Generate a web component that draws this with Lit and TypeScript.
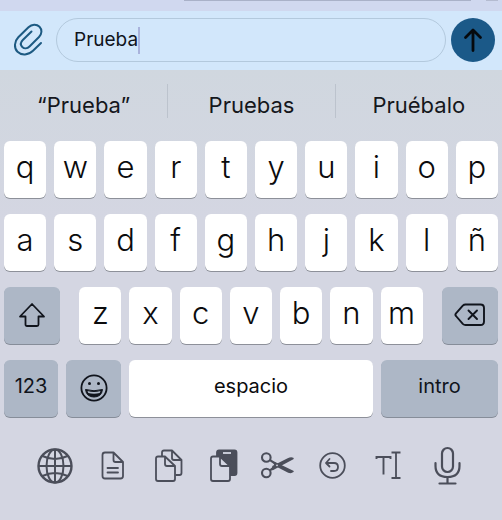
import { LitElement, html, css, svg, nothing } from "lit";
import { customElement, property, state } from "lit/decorators.js";
import { classMap } from "lit/directives/class-map.js";

const icons = {
  clip: svg`<svg width="30" height="34" viewBox="0 0 30 34" fill="none" stroke="#1d5a82" stroke-width="2" stroke-linecap="round" stroke-linejoin="round">
    <path d="M28 20L20 27.800C15.500 32.300 8.300 32.600 4.500 28.800C0.800 25 1.200 18.500 5.300 14.300L15.500 4.200C18.800 1 23.600 0.800 26.500 3.700C29.300 6.500 29 11 26 14L16.500 23.500C14.300 25.700 11.200 25.800 9.300 24C7.400 22 7.600 19.200 9.800 17L18.500 8.500"/></svg>`,
  send: svg`<svg width="22" height="26" viewBox="0 0 22 26" fill="none" stroke="#05090d" stroke-width="2.800" stroke-linecap="round" stroke-linejoin="round">
    <path d="M11 23.500V3.500M3.500 10.500L11 3L18.500 10.500"/></svg>`,
  shift: svg`<svg width="28" height="26" viewBox="0 0 28 26" fill="none" stroke="#10141c" stroke-width="1.800" stroke-linejoin="round">
    <path d="M14 2L26 14.500H20.500V22.500Q20.500 24 19 24H9Q7.500 24 7.500 22.500V14.500H2Z"/></svg>`,
  backspace: svg`<svg width="32" height="24" viewBox="0 0 32 24" fill="none" stroke="#10141c" stroke-width="1.900" stroke-linejoin="round" stroke-linecap="round">
    <path d="M11 1.500H26.500Q30 1.500 30 5V18.500Q30 22 26.500 22H11.500Q10 22 8.800 20.800L2 13Q0.800 11.700 2 10.300L8.800 2.700Q10 1.500 11.500 1.500Z"/><path d="M14.500 7.500L23 16M23 7.500L14.500 16"/></svg>`,
  smile: svg`<svg width="30" height="30" viewBox="0 0 30 30" fill="none" stroke="#10141c" stroke-width="1.800">
    <circle cx="15" cy="15" r="12.600"/><circle cx="10.500" cy="10.500" r="1.500" fill="#10141c" stroke="none"/><circle cx="19.500" cy="10.500" r="1.500" fill="#10141c" stroke="none"/>
    <path d="M6.500 16.500Q15 19 23.500 16.500Q22.500 24 15 24Q7.500 24 6.500 16.500Z" fill="#10141c" stroke-width="1"/><path d="M8.500 18Q15 19.800 21.500 18L20.700 20Q15 21.500 9.300 20Z" fill="#adb7c6" stroke="none"/></svg>`,
  globe: svg`<svg width="36" height="36" viewBox="0 0 36 36" fill="none" stroke="currentColor" stroke-width="2">
    <circle cx="18" cy="18" r="16.500" stroke-width="2.400"/><ellipse cx="18" cy="18" rx="8.500" ry="16.500"/><path d="M18 1.500V34.500M1.500 18H34.500M5.500 8Q18 14 30.500 8M5.500 28Q18 22 30.500 28"/></svg>`,
  document: svg`<svg width="36" height="36" viewBox="0 0 36 36" fill="none" stroke="currentColor" stroke-width="1.800" stroke-linejoin="round" stroke-linecap="round">
    <path d="M19.500 4.500H11Q8.500 4.500 8.500 7V28Q8.500 30.500 11 30.500H26.500Q29 30.500 29 28V14ZM19.500 4.500V12Q19.500 14 21.500 14H29M13.500 20H24M13.500 24.500H24"/></svg>`,
  copy: svg`<svg width="36" height="36" viewBox="0 0 36 36" fill="none" stroke="currentColor" stroke-width="1.800" stroke-linejoin="round">
    <path d="M12 8V4.500Q12 2.500 14 2.500H22L31.500 12V25Q31.500 27 29.500 27H25.500M22 2.500V10Q22 12 24 12H31.500"/>
    <path d="M15 8.500H8Q6 8.500 6 10.500V31Q6 33 8 33H23Q25 33 25 31V18ZM15 8.500V16Q15 18 17 18H25"/></svg>`,
  paste: svg`<svg width="36" height="36" viewBox="0 0 36 36" fill="none" stroke="currentColor" stroke-width="1.800" stroke-linejoin="round">
    <path fill="currentColor" d="M12 8V4.500Q12 2.500 14 2.500H29.500Q31.500 2.500 31.500 4.500V25Q31.500 27 29.500 27H25V17L16 8Z"/><path d="M18 5H26" stroke="#d4d6e2"/>
    <path fill="#d4d6e2" d="M15 8.500H8Q6 8.500 6 10.500V31Q6 33 8 33H23Q25 33 25 31V18ZM15 8.500V16Q15 18 17 18H25"/></svg>`,
  cut: svg`<svg width="36" height="36" viewBox="0 0 36 36" fill="none" stroke="currentColor" stroke-width="2.100">
    <circle cx="6.300" cy="9.500" r="4.300"/><circle cx="6.300" cy="25" r="4.300"/><path d="M10 12.200L16 16M10 22.300L17.500 16.500"/>
    <path fill="currentColor" stroke-width="1.500" stroke-linejoin="round" d="M13 18.500L28 11Q31 9.500 33 10.500L18 18.500L12.500 21.500Z"/><path fill="currentColor" stroke-width="1.500" stroke-linejoin="round" d="M14 14.500L18.500 16.500L33 23.500Q31 25 28.500 24L15 17Z"/><circle cx="17" cy="17.300" r="0.900" fill="#d4d6e2" stroke="none"/></svg>`,
  undo: svg`<svg width="36" height="36" viewBox="0 0 36 36" fill="none" stroke="currentColor" stroke-width="1.800" stroke-linecap="round" stroke-linejoin="round">
    <circle cx="17.500" cy="17.500" r="12.300"/><path d="M14.500 11L11 15L14.500 18.500M11 15H19Q23 15 23 19Q23 23 19 23H16"/></svg>`,
  textCursor: svg`<svg width="36" height="36" viewBox="0 0 36 36" fill="none" stroke="currentColor" stroke-width="1.900">
    <path d="M5.500 11V9H19.500V11M12.500 9V26.500"/><path stroke-width="1.800" d="M20.500 4.500H29.500M20.500 30H29.500M25 4.500V30"/></svg>`,
  mic: svg`<svg width="36" height="40" viewBox="0 0 36 40" fill="none" stroke="currentColor" stroke-width="2.200" stroke-linecap="round">
    <rect x="12" y="2" width="11" height="24" rx="5.500"/><path d="M5.500 17V20Q5.500 31 17.500 31Q29.500 31 29.500 20V17M17.500 31V37.500M9.500 37.500H25.500"/></svg>`,
};

type IconName = keyof typeof icons;

@customElement("key-cap")
class KeyCap extends LitElement {
  @property() label = "";
  @property() name = "";
  @property() icon: IconName | "" = "";
  @property() kind = "letter";

  static styles = css`
    :host { display: block; min-width: 0; }
    .key {
      display: flex; align-items: center; justify-content: center;
      box-sizing: border-box; width: 100%; height: 57px; padding: 0 0 5px;
      border: 0; border-radius: 6px; background: #fff; color: #0b0b0d;
      box-shadow: 0 1px 0 #8d9099;
      font: 300 31px/40px Inter, "Liberation Sans", sans-serif;
    }
    .word { padding: 0 0 5px; font-size: 20px; font-weight: 400; }
    .dark { padding: 0 0 2px; background: #adb7c6; color: #10141c; box-shadow: 0 1px 0 #868d99; }
    .dark.word { padding: 0 0 5px; }
    svg { display: block; }
  `;

  render() {
    const dark = this.kind === "dark";
    return html`<button type="button" aria-label=${this.name || nothing}
      class=${classMap({ key: true, dark, word: this.label.length > 1 })}>
      ${this.icon ? icons[this.icon] : this.label}</button>`;
  }
}

@customElement("app-root")
class AppRoot extends LitElement {
  @state() message = "Prueba";

  static styles = css`
    :host {
      display: block; min-height: 100vh; color: #15171c;
      background: linear-gradient(#d0d7df 70px, #d4d6e2 220px);
      font-family: Inter, "Liberation Sans", sans-serif;
    }
    button { border: 0; padding: 0; background: none; color: inherit; font: inherit; }
    svg { display: block; }
    .chat-edge { display: flex; gap: 15px; height: 11px; padding: 0 4px 0 184px; background: #d0d8ef; }
    .bubble { flex: 1; height: 1px; background: #a9b1c8; }
    .knob { flex: 0 0 12px; height: 1px; background: #b4bbd0; }
    .composer {
      display: flex; align-items: center; gap: 5px; box-sizing: border-box;
      height: 59px; padding: 0 7px 1px 13px; background: #d2e7fb;
    }
    .attach { flex: none; margin-right: 8px; }
    .field {
      display: flex; align-items: center; flex: 1; min-width: 0; box-sizing: border-box;
      height: 44px; padding: 0 17px; border: 1px solid #b3c9dd; border-radius: 22px;
    }
    .message {
      field-sizing: content; min-width: 0; max-width: 100%; border: 0; padding: 0; outline: 0;
      background: none; color: #10141c; font: 400 19px/28px Inter, "Liberation Sans", sans-serif;
    }
    .caret { flex: none; width: 2px; height: 27px; background: #a9b3dc; }
    .send {
      display: flex; align-items: center; justify-content: center; flex: none;
      width: 44px; height: 44px; border-radius: 50%; background: #1b5988;
    }
    .suggestions { display: grid; grid-template-columns: repeat(3, 1fr); padding: 14px 0 23px; }
    .suggestion { height: 34px; padding-top: 8px; font-size: 22px; line-height: 26px; }
    .suggestion + .suggestion { border-left: 1px solid #bcc3cd; }
    .keys { display: flex; flex-direction: column; gap: 16px; padding: 0 4px; }
    .row { display: grid; grid-template-columns: repeat(10, 1fr); gap: 8px; }
    .third { grid-template-columns: 56fr 3fr repeat(7, 42fr) 3fr 56fr; }
    .third > .first { grid-column: 3; }
    .third > .last { grid-column: 11; }
    .bottom { grid-template-columns: 54fr 55fr 244fr 117fr; }
    .tools {
      display: grid; grid-template-columns: 57fr 57fr 55fr 55fr 55fr 55fr 57fr 62fr;
      align-items: center; justify-items: center; height: 40px;
      padding: 29px 23px 14px 26px; color: #4b4e5a;
    }
  `;

  private letters(text: string) {
    return [...text].map((c) => html`<key-cap label=${c}></key-cap>`);
  }

  render() {
    const tools: [IconName, string][] = [
      ["globe", "Idioma"], ["document", "Documento"], ["copy", "Copiar"], ["paste", "Pegar"],
      ["cut", "Cortar"], ["undo", "Deshacer"], ["textCursor", "Seleccionar texto"], ["mic", "Dictado"],
    ];
    return html`
      <div class="chat-edge"><div class="bubble"></div><div class="knob"></div></div>
      <div class="composer">
        <button class="attach" type="button" aria-label="Adjuntar">${icons.clip}</button>
        <label class="field">
          <input class="message" type="text" aria-label="Mensaje" .value=${this.message}
            @input=${(e: Event) => (this.message = (e.target as HTMLInputElement).value)} />
          <span class="caret"></span>
        </label>
        <button class="send" type="button" aria-label="Enviar">${icons.send}</button>
      </div>
      <div class="suggestions">
        ${["“Prueba”", "Pruebas", "Pruébalo"].map((s) => html`<button class="suggestion" type="button">${s}</button>`)}
      </div>
      <div class="keys">
        <div class="row">${this.letters("qwertyuiop")}</div>
        <div class="row">${this.letters("asdfghjklñ")}</div>
        <div class="row third">
          <key-cap kind="dark" icon="shift" name="Mayúsculas"></key-cap>
          <key-cap class="first" label="z"></key-cap>
          ${this.letters("xcvbnm")}
          <key-cap class="last" kind="dark" icon="backspace" name="Borrar"></key-cap>
        </div>
        <div class="row bottom">
          <key-cap kind="dark" label="123"></key-cap>
          <key-cap kind="dark" icon="smile" name="Emoji"></key-cap>
          <key-cap label="espacio"></key-cap>
          <key-cap kind="dark" label="intro"></key-cap>
        </div>
      </div>
      <div class="tools">
        ${tools.map(([icon, name]) => html`<button type="button" aria-label=${name}>${icons[icon]}</button>`)}
      </div>
    `;
  }
}
